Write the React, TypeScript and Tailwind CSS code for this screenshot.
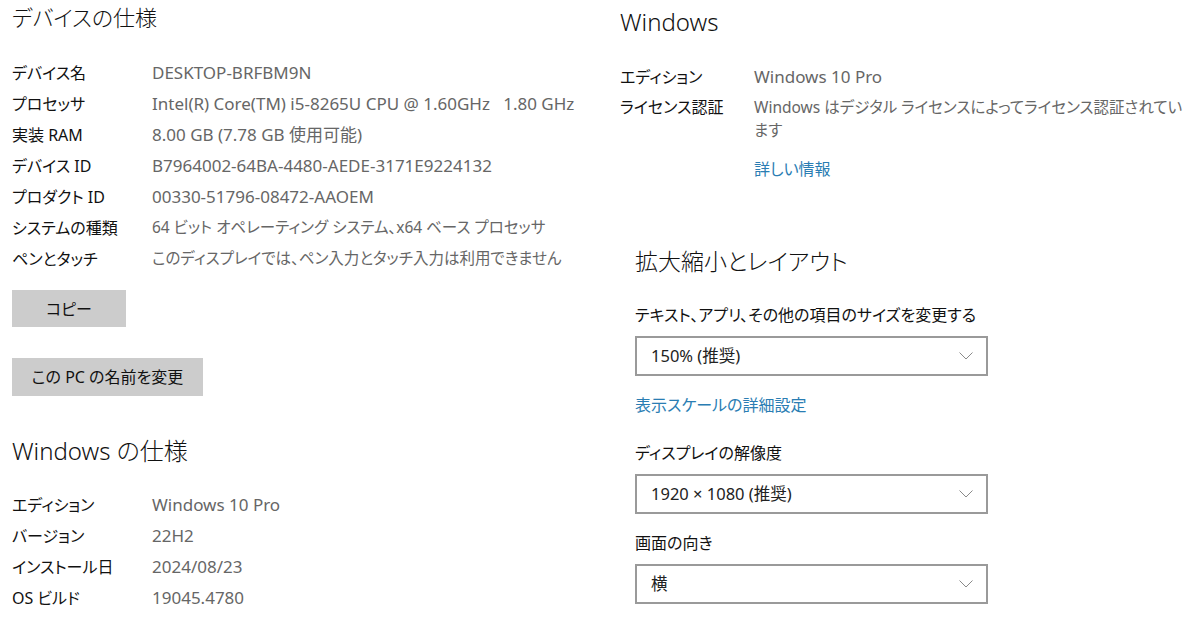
const font = "font-['Noto_Sans','Noto_Sans_CJK_JP',sans-serif] [font-feature-settings:'palt']";

// cjk: value is mostly Japanese text, set slightly smaller so widths match
const deviceSpecs: { label: string; value: string; cjk?: boolean }[] = [
  { label: "デバイス名", value: "DESKTOP-BRFBM9N" },
  { label: "プロセッサ", value: "Intel(R) Core(TM) i5-8265U CPU @ 1.60GHz   1.80 GHz" },
  { label: "実装 RAM", value: "8.00 GB (7.78 GB 使用可能)" },
  { label: "デバイス ID", value: "B7964002-64BA-4480-AEDE-3171E9224132" },
  { label: "プロダクト ID", value: "00330-51796-08472-AAOEM" },
  { label: "システムの種類", value: "64 ビット オペレーティング システム、x64 ベース プロセッサ", cjk: true },
  { label: "ペンとタッチ", value: "このディスプレイでは、ペン入力とタッチ入力は利用できません", cjk: true },
];

const windowsSpecs = [
  { label: "エディション", value: "Windows 10 Pro" },
  { label: "バージョン", value: "22H2" },
  { label: "インストール日", value: "2024/08/23" },
  { label: "OS ビルド", value: "19045.4780" },
];

function SpecRow({ label, value, cjk }: { label: string; value: string; cjk?: boolean }) {
  return (
    <div className="flex h-[31px] items-center">
      <span className="w-[140px] shrink-0 text-[16px] text-[#111]">{label}</span>
      <span className={`whitespace-pre text-[#666] ${cjk ? "text-[15.5px]" : "text-[17px]"}`}>{value}</span>
    </div>
  );
}

function Chevron() {
  return (
    <svg width="14" height="8" viewBox="0 0 14 8" fill="none" stroke="#8a8a8a" strokeWidth="1">
      <path d="M0.5 0.5 L7 7 L13.5 0.5" />
    </svg>
  );
}

function Dropdown({ value }: { value: string }) {
  return (
    <div className="flex h-[40px] w-[353px] items-center justify-between border-2 border-[#9a9a9a] pl-[14px] pr-[13px] text-[16.5px] text-[#222]">
      <span>{value}</span>
      <Chevron />
    </div>
  );
}

export default function App() {
  return (
    <div className={`flex h-[635px] w-[1200px] bg-white ${font}`}>
      {/* left: device + windows specs */}
      <div className="flex w-[608px] flex-col pl-3">
        <h1 className="h-[35px] text-[22px] font-light leading-[35px] text-[#111]">デバイスの仕様</h1>
        <div className="mt-[22px]">
          {deviceSpecs.map((s) => (
            <SpecRow key={s.label} {...s} />
          ))}
        </div>
        <button className="mt-[16px] h-[37px] w-[114px] bg-[#cccccc] text-[16px] text-[#111]">コピー</button>
        <button className="mt-[31px] h-[38px] w-[191px] bg-[#cccccc] text-[16px] text-[#111]">この PC の名前を変更</button>
        <h2 className="mt-[37px] h-[35px] text-[24px] font-light leading-[35px] text-[#111]">Windows の仕様</h2>
        <div className="mt-[21px]">
          {windowsSpecs.map((s) => (
            <SpecRow key={s.label} {...s} />
          ))}
        </div>
      </div>

      {/* right: windows edition + scaling */}
      <div className="flex flex-1 flex-col">
        <div className="pl-[12px]">
          <h2 className="mt-[4px] h-[35px] text-[24px] font-light leading-[35px] text-[#111]">Windows</h2>
          <div className="mt-[22px] flex h-[31px] items-center">
            <span className="w-[134px] shrink-0 text-[16px] text-[#111]">エディション</span>
            <span className="text-[17px] text-[#666]">Windows 10 Pro</span>
          </div>
          <div className="flex">
            <span className="w-[134px] shrink-0 pt-[4px] text-[16px] leading-[23px] text-[#111]">ライセンス認証</span>
            <div className="flex flex-col">
              <p className="whitespace-nowrap pt-[4px] text-[15.5px] leading-[23px] text-[#666]">
                Windows はデジタル ライセンスによってライセンス認証されてい
                <br />
                ます
              </p>
              <a className="mt-[15px] text-[16px] leading-[24px] text-[#2a7db3]">詳しい情報</a>
            </div>
          </div>
        </div>

        <div className="mt-[63px] pl-[27px]">
          <h2 className="h-[35px] text-[23px] font-light leading-[35px] text-[#111]">拡大縮小とレイアウト</h2>
          <p className="mt-[24px] text-[16px] leading-[24px] text-[#111]">テキスト、アプリ、その他の項目のサイズを変更する</p>
          <div className="mt-[9px]">
            <Dropdown value="150% (推奨)" />
          </div>
          <a className="mt-[17px] block text-[16px] leading-[24px] text-[#2a7db3]">表示スケールの詳細設定</a>
          <p className="mt-[24px] text-[16px] leading-[24px] text-[#111]">ディスプレイの解像度</p>
          <div className="mt-[9px]">
            <Dropdown value="1920 × 1080 (推奨)" />
          </div>
          <p className="mt-[17px] text-[16px] leading-[24px] text-[#111]">画面の向き</p>
          <div className="mt-[9px]">
            <Dropdown value="横" />
          </div>
        </div>
      </div>
    </div>
  );
}
